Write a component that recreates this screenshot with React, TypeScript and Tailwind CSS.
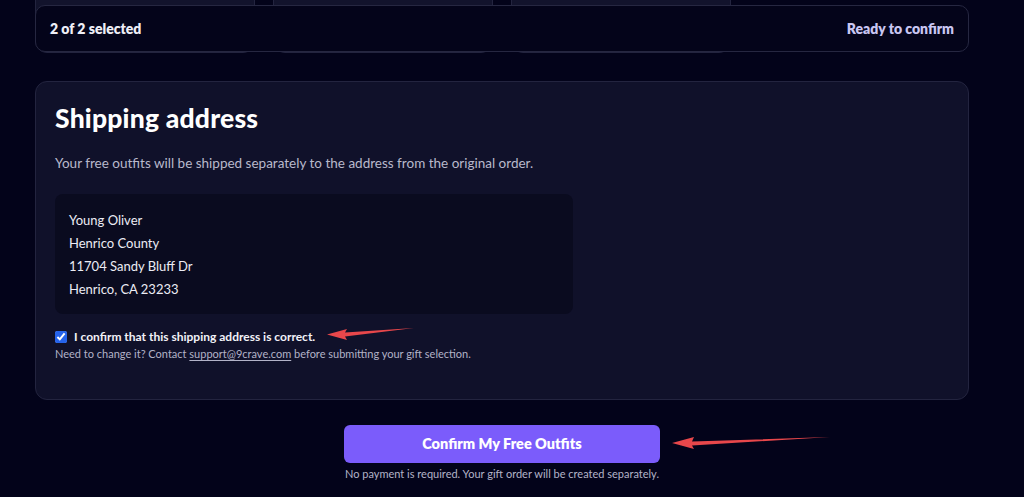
export default function App() {
  return (
    <div
      className="relative min-h-screen w-full overflow-hidden bg-[#03031a] text-white"
      style={{ fontFamily: 'Lato, "Open Sans", sans-serif' }}
    >
      <div className="ml-[35px] w-[934px]">
        {/* Outfit cards, scrolled under the sticky bar */}
        <div className="relative">
          <div className="mt-[-150px] grid grid-cols-4 gap-[18px]">
            <div className="h-[203px] rounded-xl border border-[#23243f] bg-[#12132c]" />
            <div className="h-[203px] rounded-xl border border-[#23243f] bg-[#12132c]" />
            <div className="h-[203px] rounded-xl border border-[#23243f] bg-[#12132c]" />
          </div>

          {/* Sticky selection bar */}
          <div className="absolute inset-x-0 bottom-[1px] flex h-[47px] items-center justify-between rounded-[10px] border border-[#262741] bg-[#04041a] px-[14px]">
            <span className="text-[14px] font-extrabold text-[#eeeef6]">2 of 2 selected</span>
            <span className="text-[14px] font-extrabold text-[#c9c6f2]">Ready to confirm</span>
          </div>
        </div>

        {/* Shipping address */}
        <section className="mt-[28px] h-[319px] rounded-xl border border-[#23243f] bg-[#10112a] px-[19px] pt-[18px]">
          <h2 className="text-[26.5px] font-black leading-[36px] tracking-[0.2px] text-white">
            Shipping address
          </h2>
          <p className="mt-[17px] text-[13.5px] leading-[20px] text-[#b9b9cc]">
            Your free outfits will be shipped separately to the address from the original order.
          </p>

          <div className="mt-[21px] w-[518px] rounded-lg bg-[#0a0b1f] px-[14px] pb-[13px] pt-[15px] text-[13px] leading-[23px] text-[#ececf4]">
            <div>Young Oliver</div>
            <div>Henrico County</div>
            <div>11704 Sandy Bluff Dr</div>
            <div>Henrico, CA 23233</div>
          </div>

          <label className="mt-[14px] flex items-center gap-[7px]">
            <input type="checkbox" defaultChecked className="h-[12px] w-[12px] accent-[#2563eb]" />
            <span className="text-[12px] font-bold text-[#f2f2f8]">
              I confirm that this shipping address is correct.
            </span>
          </label>
          <p className="mt-0 text-[11px] leading-[16px] text-[#b3b3c8]">
            Need to change it? Contact{' '}
            <a className="underline underline-offset-2">support@9crave.com</a> before submitting your
            gift selection.
          </p>
        </section>

        {/* Confirm */}
        <div className="mt-[25px] flex flex-col items-center">
          <button className="h-[38px] w-[316px] rounded-md bg-[#7b5cfb] text-[14.5px] font-extrabold text-white">
            Confirm My Free Outfits
          </button>
          <p className="mt-[3px] text-[11px] text-[#b3b3c8]">
            No payment is required. Your gift order will be created separately.
          </p>
        </div>
      </div>

      {/* Annotation arrows */}
      <svg className="pointer-events-none absolute left-0 top-0" width="1024" height="497">
        <path d="M414 328 L345 332.5 L347 329 L327 334.5 L347 340 L345 336.5 Z" fill="#e8474b" />
        <path d="M830 437 L692 441.5 L694 437 L672 443 L694 449 L692 445.5 Z" fill="#e8474b" />
      </svg>
    </div>
  );
}
